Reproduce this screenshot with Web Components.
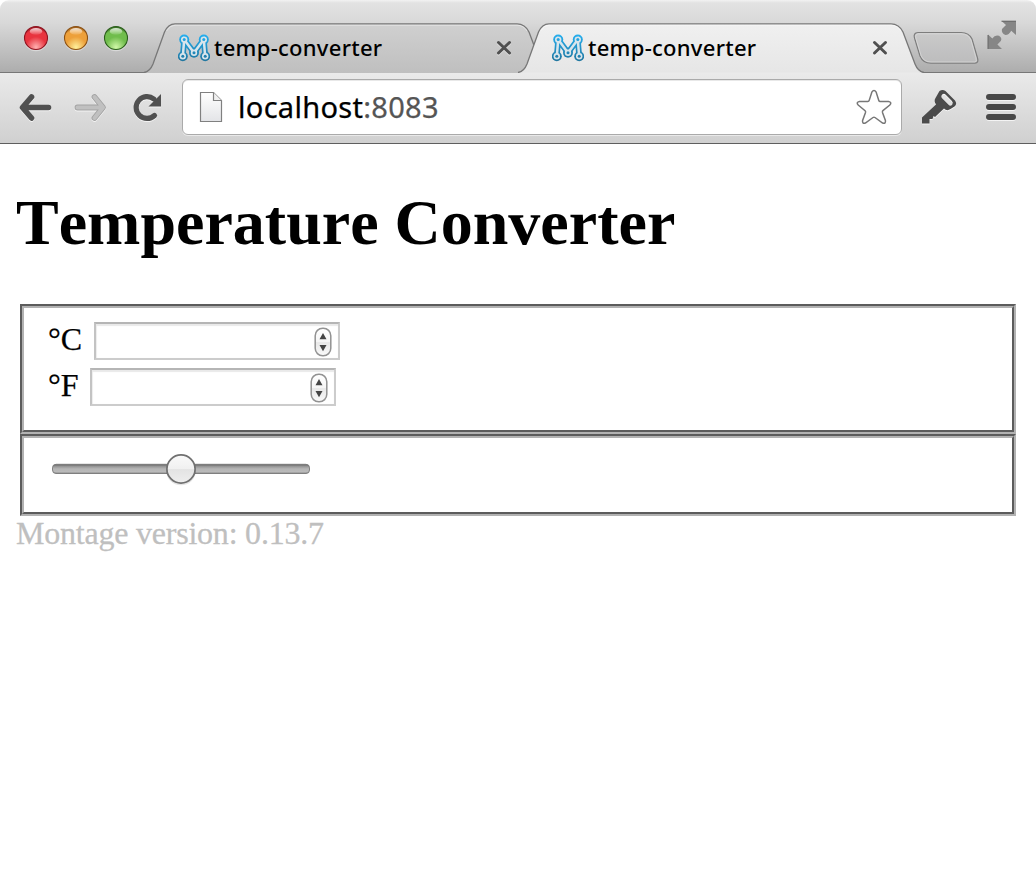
<!DOCTYPE html>
<html lang="en"><head><meta charset="utf-8"><title>temp-converter</title>
<style>
body{margin:0;background:#fff;color:#000;font-family:"Liberation Serif",serif;width:1036px;height:894px;overflow:hidden}
</style></head><body>
<browser-window>
  <tab-strip slot="tabs">
    <browser-tab>temp-converter</browser-tab>
    <browser-tab active>temp-converter</browser-tab>
  </tab-strip>
  <tool-bar slot="toolbar"><span>localhost</span><span style="color:#555">:8083</span></tool-bar>
  <temp-page></temp-page>
</browser-window>
<script>
const define = (name, html) => customElements.define(name, class extends HTMLElement {
  constructor() {
    super();
    this.attachShadow({mode: 'open'}).innerHTML = html;
  }
});

define('browser-window', `
<style>:host{display:flex;flex-direction:column;width:1036px;height:894px;overflow:hidden;border-radius:9px 9px 0 0}</style>
<slot name="tabs"></slot><slot name="toolbar"></slot><slot></slot>`);

define('window-lights', `
<style>:host{display:flex;gap:14px;padding:25px 0 0 23px;width:121px;box-sizing:content-box}
svg{display:block;width:26px;height:27px;flex:none}</style>
${[['r','#8d1420','#e8343f','#ffb0b0'],['y','#8b5114','#eda03a','#fff09a'],['g','#2b5d1c','#70bd4c','#d0f8a8']].map(([n,d,m,l])=>`
<svg viewBox="0 0 26 27"><defs><radialGradient id="${n}" cx=".5" cy=".9" r=".9"><stop offset="0" stop-color="${l}"/><stop offset=".5" stop-color="${m}"/><stop offset=".8" stop-color="${m}"/><stop offset="1" stop-color="${d}"/></radialGradient>
<linearGradient id="${n}h" x2="0" y2="1"><stop stop-color="#fff" stop-opacity=".8"/><stop offset="1" stop-color="#fff" stop-opacity=".1"/></linearGradient></defs>
<circle cx="13" cy="14.2" r="12" fill="#fff" opacity=".4"/><circle cx="13" cy="13" r="11.5" fill="url(#${n})" stroke="${d}" stroke-width="1.1"/><ellipse cx="13" cy="6.4" rx="6.2" ry="3.3" fill="url(#${n}h)"/></svg>`).join('')}`);

define('tab-strip', `
<style>:host{display:flex;height:73px;box-sizing:border-box;position:relative;background:linear-gradient(#f2f2f2 0,#e2e2e2 3px,#d9d9d9 22px,#adadad 72px);box-shadow:inset 0 -1px #777}
.tabs{display:flex;padding-top:23px}
.new{width:66px;height:34px;margin:31px 0 0 -11px;flex:none}
.full{width:30px;height:30px;margin:20px 0 0 8px;flex:none}</style>
<window-lights></window-lights><div class="tabs"><slot></slot></div>
<svg class="new" viewBox="0 0 66 34"><defs><linearGradient id="n" x2="0" y2="1"><stop stop-color="#cacaca"/><stop offset="1" stop-color="#bcbcbd"/></linearGradient></defs>
<path d="M5 1.500H48Q56 1.500 59 8L64.500 27Q66 32 62 32.200H18Q10 32.200 7 25L1.500 7Q0 2 5 1.500Z" fill="url(#n)" stroke="#7d7d7d" stroke-width="1.200"/><path d="M5.500 2.800H48Q55 2.800 58 9L63 27Q64 31 62 31H18Q11 31 8.200 25L2.800 7Q1.900 3.200 5.500 2.800Z" fill="none" stroke="#ddd" opacity=".7"/></svg>
<svg class="full" viewBox="0 0 30 30"><path d="M14.500 1H29V15L24.200 10.800Q22 15 18.400 15Q14 13 15 9L19 5ZM1 14.500L5.300 18.500Q8 14.500 12 15.800Q15.500 18 13.800 21L10.400 24.500L15 29H1Z" fill="#868686"/><path d="M14.500 1.200H29M1 15V29" stroke="#666"/></svg>`);

define('montage-icon', `
<style>:host{display:block;width:32px;height:28px;flex:none}svg{display:block}</style>
<svg width="32" height="28" viewBox="0 0 32 28"><defs><linearGradient id="b" gradientUnits="userSpaceOnUse" x1="0" y1="1" x2="0" y2="27"><stop stop-color="#24aeee"/><stop offset="1" stop-color="#21769f"/></linearGradient></defs>
<g fill="url(#b)" stroke="url(#b)"><path d="M4.800 22.300L6.200 5.600L16 18.800L25.800 5.600L27.200 22.300" fill="none" stroke-width="5.800" stroke-linejoin="round"/><g stroke="none"><circle cx="6.200" cy="5.600" r="5"/><circle cx="25.800" cy="5.600" r="5"/><circle cx="4.800" cy="22.300" r="5"/><circle cx="27.200" cy="22.300" r="5"/><circle cx="16" cy="18.800" r="5"/></g></g>
<g fill="#d9e5eb" stroke="#d9e5eb"><path d="M4.800 22.300L6.200 5.600L16 18.800L25.800 5.600L27.200 22.300" fill="none" stroke-width="2.500"/><g stroke="none"><circle cx="6.200" cy="5.600" r="3.200"/><circle cx="25.800" cy="5.600" r="3.200"/><circle cx="4.800" cy="22.300" r="3.200"/><circle cx="27.200" cy="22.300" r="3.200"/><circle cx="16" cy="18.800" r="3.200"/></g></g>
<g fill="url(#b)"><circle cx="6.200" cy="5.600" r="1.500"/><circle cx="25.800" cy="5.600" r="1.500"/><circle cx="4.800" cy="22.300" r="1.500"/><circle cx="27.200" cy="22.300" r="1.500"/><circle cx="16" cy="18.800" r="1.500"/></g></svg>`);

define('browser-tab', `
<style>:host{display:block;position:relative;width:406px;height:50px;margin-right:-32px;--a:#d0d0d0;--b:#bfbfbf;--end:38px}
:host([active]){--a:#f0f0f0;--b:#e6e6e6;--end:36px;z-index:1;margin-right:0}
.shape{position:absolute;inset:0;width:406px;height:50px}
.base{display:none}:host([active]) .base{display:block}
.row{position:relative;display:flex;align-items:center;height:50px;padding:0 var(--end) 0 34px;box-sizing:border-box}
.title{flex:1;margin-left:4px;padding-bottom:2px;font:500 22px/30px "Noto Sans",sans-serif;letter-spacing:.28px;white-space:nowrap}
.x{width:16px;height:16px}</style>
<svg class="shape" viewBox="0 0 406 50"><defs><linearGradient id="t" x2="0" y2="1"><stop style="stop-color:var(--a)"/><stop offset="1" style="stop-color:var(--b)"/></linearGradient></defs>
<path d="M0 50Q6 49 9 41L20.500 9Q24 .8 31 .8H373Q381 .8 385 9L397 41Q400 49 406 50Z" fill="url(#t)"/>
<path d="M0 49.500Q6 48.500 9 41L20.500 9Q24 .8 31 .8H373Q381 .8 385 9L397 41Q400 48.500 406 49.500" fill="none" stroke="#777" stroke-width="1.300"/>
<path d="M22.500 8Q26 2.200 31 2.200H373Q379.500 2.200 383 8" fill="none" stroke="#fff" opacity=".45"/>
<path class="base" d="M5 49.500H401" stroke="#e8e8e8" stroke-width="1.200"/></svg>
<div class="row"><montage-icon></montage-icon><span class="title"><slot></slot></span>
<svg class="x" viewBox="0 0 16 16"><path d="M2.500 3.500L13.500 14M13.500 3.500L2.500 14" stroke="#fff" opacity=".5" stroke-width="3" stroke-linecap="round"/><path d="M2.500 2.500L13.500 13M13.500 2.500L2.500 13" stroke="#505050" stroke-width="3" stroke-linecap="round"/></svg></div>`);

define('tool-bar', `
<style>:host{display:flex;height:71px;box-sizing:border-box;border-bottom:1px solid #5e5e5e;background:linear-gradient(#eaeaea,#d0d0d0);padding-left:18px;align-items:flex-start}
svg{display:block;flex:none;overflow:visible}
.nav{display:flex;gap:23px;padding-top:19px;width:164px;filter:drop-shadow(0 1px 0 rgba(255,255,255,.7))}
.omni{display:flex;box-sizing:border-box;width:720px;height:56px;margin-top:6px;border:1px solid #aaa;border-radius:6px;background:#fff;box-shadow:0 1px rgba(255,255,255,.5),inset 0 1px #e8e8e8;padding:0 9px 0 16px;align-items:center}
.url{flex:1;margin-left:15px;font:29px/40px "Noto Sans",sans-serif;letter-spacing:.3px;white-space:nowrap;-webkit-text-stroke:.25px}
.right{display:flex;padding:17px 0 0 19px;gap:29px;filter:drop-shadow(0 1px 0 rgba(255,255,255,.7))}</style>
<div class="nav">
<svg width="34" height="30" viewBox="0 0 34 30"><path d="M30.500 15.500H6M13.500 5L4.500 15.500L13.500 26" fill="none" stroke="#505050" stroke-width="5.600" stroke-linecap="round" stroke-linejoin="round"/></svg>
<svg width="34" height="30" viewBox="0 0 34 30"><g fill="none" stroke-linecap="round" stroke-linejoin="round"><path d="M2.500 15.500H27M19.500 5L28 15.500L19.500 26" stroke="#a3a3a3" stroke-width="5.800"/><path d="M2.500 15.500H27M19.500 5L28 15.500L19.500 26" stroke="#c0c0c0" stroke-width="4"/></g></svg>
<svg width="30" height="30" viewBox="0 0 30 30"><path d="M22.500 23.500A10.900 10.900 0 1 1 21.800 7" fill="none" stroke="#505050" stroke-width="5.200" stroke-linecap="round"/><path d="M29 2V14.500H16.500Z" fill="#505050"/></svg>
</div>
<div class="omni"><svg width="24" height="32" viewBox="0 0 24 32"><defs><linearGradient id="p" x2="0" y2="1"><stop stop-color="#fff"/><stop offset="1" stop-color="#e3e4e7"/></linearGradient></defs><path d="M1.500 1.500H14.500L22.500 9.500V30.500H1.500Z" fill="url(#p)" stroke="#808080" stroke-width="1.200"/><path d="M14.500 1.500V9.500H22.500" fill="#f0f0f0" stroke="#808080" stroke-width="1.200"/></svg>
<span class="url"><slot></slot></span>
<svg width="36" height="36" viewBox="0 0 36 36"><path d="M15.800 3.200Q18 -.2 20.200 3.200L22.800 11.400Q23.100 12.400 24.200 12.400L32.500 12.500Q36.300 13.200 33.800 16L26.900 21.700Q26.200 22.300 26.500 23.400L29.400 31.500Q30 35 26.600 34L19 28.500Q18 27.800 17 28.500L9.400 34Q6 35 6.600 31.500L9.500 23.400Q9.800 22.300 9.100 21.700L2.200 16Q-.3 13.200 3.500 12.500L11.800 12.400Q12.900 12.400 13.200 11.400Z" fill="#fff" stroke="#777" stroke-width="1.500"/></svg></div>
<div class="right"><svg width="36" height="34" viewBox="0 0 36 34"><path fill-rule="evenodd" d="M18.500 1Q21.500-1 24.500 1L34 10.500Q36.500 14 33.500 16.500L29.500 19Q26 21.500 23 18.500L14 27L12.500 26L11.500 29L8.500 29V33.500H1V27.500L15 14.500Q12.500 11 14.500 8ZM21.500 4.300Q19.300 6.500 21.300 8.500L27.500 14.800Q29.500 16.800 31.300 14.500Q32.500 12.500 30.700 10.800L25 5Q23 2.800 21.500 4.300Z" fill="#4b4b4b"/></svg>
<svg width="30" height="34" viewBox="0 0 30 34"><path d="M3 7H27M3 17H27M3 27H27" stroke="#484848" stroke-width="6" stroke-linecap="round"/></svg></div>`);

define('groove-box', `
<style>:host{display:block;border:2px solid;border-color:#5c5c5c #b2b2b2 #b2b2b2 #5c5c5c;box-sizing:border-box}
div{height:100%;box-sizing:border-box;border:2px solid;border-color:#b2b2b2 #5c5c5c #5c5c5c #b2b2b2;padding:14px 24px}</style><div><slot></slot></div>`);

define('number-field', `
<style>:host{display:flex;height:46px;align-items:flex-start;font-size:32px;line-height:34px;-webkit-text-stroke:.25px}
.box{display:flex;justify-content:flex-end;align-items:center;box-sizing:border-box;width:246px;height:38px;margin-left:12px;border:2px solid #ccc;border-top-color:#b5b5b5;border-left-color:#c3c3c3;padding-right:6px;box-shadow:inset 0 2px 1px #e9e9e9,inset 1px 0 1px #eee}
svg{display:block;margin-top:1px}</style>
<slot></slot><div class="box"><svg width="18" height="30" viewBox="0 0 18 30"><defs><linearGradient id="s" x2="0" y2="1"><stop stop-color="#fff"/><stop offset=".5" stop-color="#f5f5f5"/><stop offset=".52" stop-color="#e8e8e8"/><stop offset="1" stop-color="#fafafa"/></linearGradient></defs><rect x="1.200" y="1.200" width="15.600" height="27.600" rx="7.500" fill="url(#s)" stroke="#929292" stroke-width="1.500"/><path d="M5.500 12.200H12.500L9 6ZM5.500 18H12.500L9 24.200Z" fill="#444"/></svg></div>`);

define('range-slider', `
<style>:host{display:block;width:258px;height:32px;margin-left:4px}svg{display:block;overflow:visible}</style>
<svg width="258" height="32" viewBox="0 0 258 32"><defs><linearGradient id="r" x2="0" y2="1"><stop stop-color="#636363"/><stop offset=".25" stop-color="#999"/><stop offset=".5" stop-color="#b5b5b5"/><stop offset=".8" stop-color="#bababa"/><stop offset="1" stop-color="#8b8b8b"/></linearGradient><linearGradient id="k" x2="0" y2="1"><stop stop-color="#fafafa"/><stop offset=".5" stop-color="#f0f0f0"/><stop offset=".52" stop-color="#e3e3e3"/><stop offset="1" stop-color="#eee"/></linearGradient></defs>
<rect x=".5" y="12.300" width="257" height="9.200" rx="3.500" fill="url(#r)" stroke="#777" stroke-width=".9"/><circle cx="129" cy="18.300" r="15" fill="#000" opacity=".1"/><circle cx="129" cy="17" r="14.100" fill="url(#k)" stroke="#707070" stroke-width="1.700"/></svg>`);

define('temp-page', `
<style>:host{display:block;flex:1;background:#fff;padding:42px 20px 0;font-size:32px}
h1{font:bold 64px/74px "Liberation Serif",serif;font-kerning:none;margin:0 0 44px -4px;white-space:nowrap}
.one{height:130px}.two{height:82px}
.f{display:block;width:29.500px}.c{display:block;width:34px}
footer{margin-left:-4px;color:#bfbfbf;line-height:34px;letter-spacing:-.22px;-webkit-text-stroke:.3px;white-space:nowrap}</style>
<h1>Temperature Converter</h1>
<groove-box class="one"><number-field><span class="c">°C</span></number-field><number-field><span class="f">°F</span></number-field></groove-box>
<groove-box class="two"><range-slider></range-slider></groove-box>
<footer>Montage version: 0.13.7</footer>`);
</script></body></html>
